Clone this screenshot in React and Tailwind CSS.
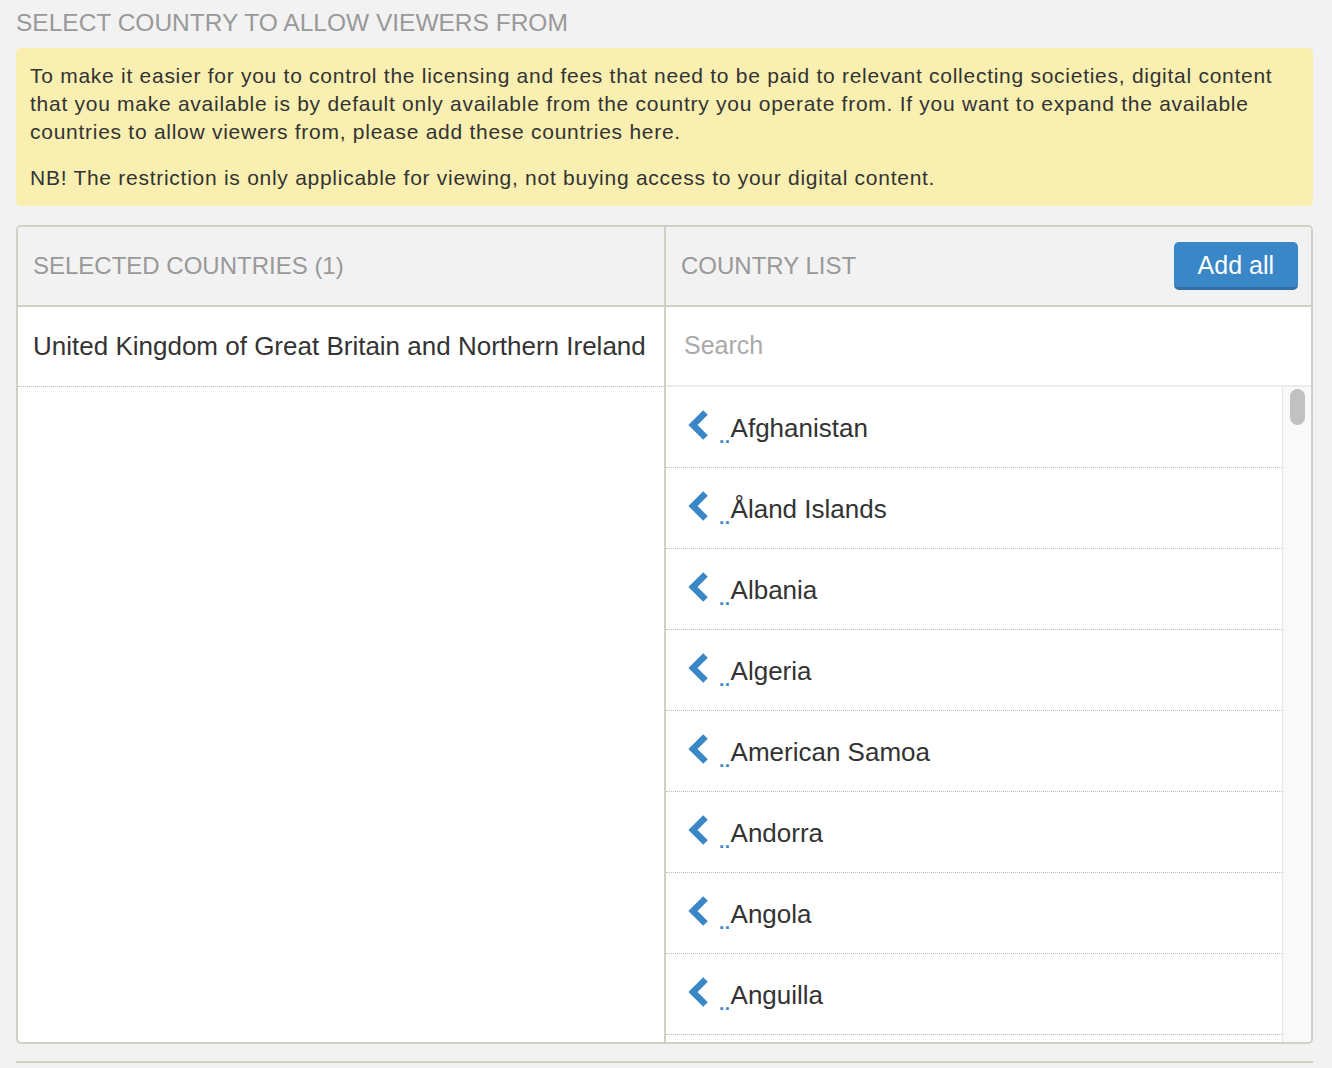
import React from 'react';

const countries = [
    'Afghanistan',
    'Åland Islands',
    'Albania',
    'Algeria',
    'American Samoa',
    'Andorra',
    'Angola',
    'Anguilla',
    'Antarctica',
];

function Chevron() {
    return (
        <svg width="22" height="30" viewBox="0 0 22 30" className="mb-[4px] shrink-0">
            <path d="M18.5 2.5 L6 15 L18.5 27.5" fill="none" stroke="#3a87c8" strokeWidth="6.5" strokeLinecap="butt" strokeLinejoin="miter" />
        </svg>
    );
}

export default function App() {
    return (
        <div className="min-h-screen bg-[#f2f2f2] pl-4 pr-[19px] text-[#333]" style={{ fontFamily: '"Liberation Sans", Arial, sans-serif' }}>
            <h2 className="pt-[8px] text-[24.5px] leading-[30px] text-[#999]">SELECT COUNTRY TO ALLOW VIEWERS FROM</h2>

            {/* info box */}
            <div className="mt-[10px] rounded-[5px] bg-[#f8efb0] px-[14px] pt-[14px] pb-[14px] text-[21px] leading-[28px] tracking-[0.73px] text-[#333]">
                <p>To make it easier for you to control the licensing and fees that need to be paid to relevant collecting societies, digital content that you make available is by default only available from the country you operate from. If you want to expand the available countries to allow viewers from, please add these countries here.</p>
                <p className="mt-[18px]">NB! The restriction is only applicable for viewing, not buying access to your digital content.</p>
            </div>

            {/* picker */}
            <div className="mt-[19px] flex h-[819px] overflow-hidden rounded-[5px] border-2 border-[#d0d0c6] bg-white">
                <div className="flex w-[648px] flex-col border-r-2 border-[#d0d0c6]">
                    <div className="flex h-[80px] items-center border-b-2 border-[#d0d0c6] bg-[#f2f2f2] px-[15px] text-[24px] text-[#999]">
                        SELECTED COUNTRIES (1)
                    </div>
                    <div className="flex h-[80px] items-center border-b border-dotted border-[#bbb] px-[15px] text-[26px]">
                        United Kingdom of Great Britain and Northern Ireland
                    </div>
                </div>
                <div className="flex flex-1 flex-col">
                    <div className="flex h-[80px] items-center justify-between border-b-2 border-[#d0d0c6] bg-[#f2f2f2] pl-[15px] pr-[13px] text-[24px] text-[#999]">
                        <span>COUNTRY LIST</span>
                        <button className="h-[48px] rounded-[5px] border-b-[3px] border-[#2f6ea6] bg-[#3a87c8] px-[24px] pt-[2px] text-[25px] text-white">Add all</button>
                    </div>
                    <div className="flex h-[80px] items-center border-b-2 border-[#ececec] px-[18px] text-[25px] text-[#aaa]">
                        Search
                    </div>
                    <div className="flex flex-1 overflow-hidden">
                        <div className="flex-1">
                            {countries.map((c) => (
                                <div key={c} className="flex h-[81px] items-center border-b border-dotted border-[#bbb] pl-[21px] text-[26px]">
                                    <Chevron />
                                    <span className="mt-[18px] ml-[10px] text-[19px] font-bold leading-none tracking-[0.5px] text-[#3a87c8]">..</span>
                                    <span className="mt-[2px]">{c}</span>
                                </div>
                            ))}
                        </div>
                        <div className="flex w-[29px] justify-center border-l border-[#e4e4e4] bg-[#f9f9f9] pt-[2px]">
                            <div className="h-[36px] w-[15px] rounded-full bg-[#c1c1c1]"></div>
                        </div>
                    </div>
                </div>
            </div>

            <div className="mt-[17px] h-[2px] bg-[#d0d0c6]"></div>
        </div>
    );
}
